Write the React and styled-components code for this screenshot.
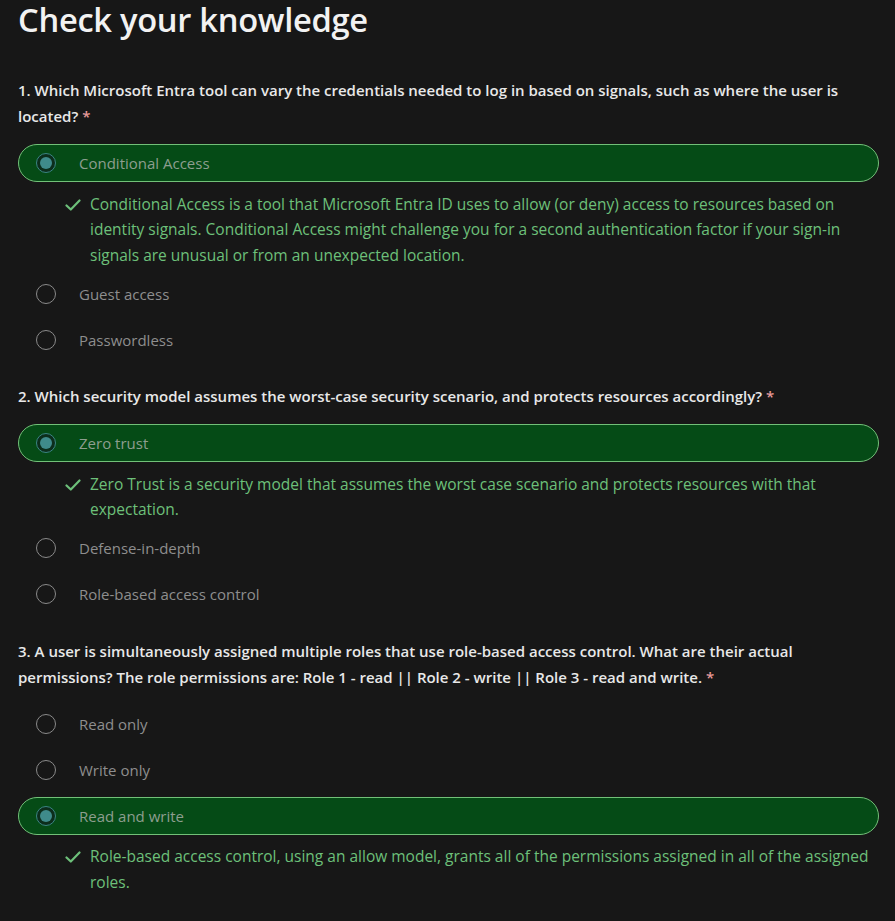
import styled, { createGlobalStyle } from "styled-components";

const GlobalStyle = createGlobalStyle`
  html, body {
    margin: 0;
    padding: 0;
    background: #171717;
  }
  body {
    font-family: "Segoe UI", "Open Sans", "Noto Sans", sans-serif;
  }
`;

const Page = styled.main`
  padding: 0 16px 40px 18px;
  background: #171717;
  min-height: 921px;
  box-sizing: border-box;
`;

const Title = styled.h2`
  margin: 0;
  font-size: 32.7px;
  line-height: 40px;
  font-weight: 600;
  color: #f2f2f2;
  letter-spacing: -0.3px;
`;

const Question = styled.section`
  margin-top: ${(p) => (p.$first ? "37px" : "24.5px")};
`;

const Prompt = styled.p`
  margin: 0;
  font-size: 15px;
  line-height: 26px;
  font-weight: 600;
  color: #e8e8e8;
`;

const Required = styled.span`
  color: #e79a9a;
`;

const Options = styled.div`
  display: flex;
  flex-direction: column;
  gap: 8px;
  margin-top: 15px;
`;

const Option = styled.label`
  display: flex;
  align-items: center;
  gap: 23px;
  height: 38px;
  box-sizing: border-box;
  padding-left: 17px;
  border-radius: 19px;
  border: 1px solid ${(p) => (p.$selected ? "#72c078" : "transparent")};
  background: ${(p) => (p.$selected ? "#054b16" : "transparent")};
  font-size: 15px;
  color: ${(p) => (p.$selected ? "#8d9e8f" : "#8e8e8e")};
`;

const Radio = styled.span`
  position: relative;
  width: 20px;
  height: 20px;
  box-sizing: border-box;
  border-radius: 50%;
  flex-shrink: 0;
  border: 1px solid ${(p) => (p.$selected ? "#3b8484" : "#8a8a8a")};
  background: ${(p) => (p.$selected ? "#0c2e1c" : "transparent")};

  &::after {
    content: "";
    display: ${(p) => (p.$selected ? "block" : "none")};
    position: absolute;
    inset: 3px;
    border-radius: 50%;
    background: #3f8b8b;
  }
`;

const Feedback = styled.div`
  display: flex;
  align-items: flex-start;
  gap: 9px;
  margin: 9.5px 0 -1.5px;
  padding-left: 47px;
  font-size: 15.5px;
  line-height: 25.5px;
  color: #6dc07a;
`;

const CheckIcon = styled.svg`
  flex-shrink: 0;
  width: 16px;
  height: 16px;
  margin-top: 5px;
`;

function Check() {
  return (
    <CheckIcon viewBox="0 0 16 16" fill="none">
      <path
        d="M1.5 8.5 L5.8 12.5 L14.5 3.5"
        stroke="#6dc07a"
        strokeWidth="2.2"
        strokeLinecap="round"
        strokeLinejoin="round"
      />
    </CheckIcon>
  );
}

const questions = [
  {
    prompt:
      "1. Which Microsoft Entra tool can vary the credentials needed to log in based on signals, such as where the user is located?",
    options: ["Conditional Access", "Guest access", "Passwordless"],
    answer: 0,
    feedback:
      "Conditional Access is a tool that Microsoft Entra ID uses to allow (or deny) access to resources based on identity signals. Conditional Access might challenge you for a second authentication factor if your sign-in signals are unusual or from an unexpected location.",
  },
  {
    prompt:
      "2. Which security model assumes the worst-case security scenario, and protects resources accordingly?",
    options: ["Zero trust", "Defense-in-depth", "Role-based access control"],
    answer: 0,
    feedback:
      "Zero Trust is a security model that assumes the worst case scenario and protects resources with that expectation.",
  },
  {
    prompt:
      "3. A user is simultaneously assigned multiple roles that use role-based access control. What are their actual permissions? The role permissions are: Role 1 - read || Role 2 - write || Role 3 - read and write.",
    options: ["Read only", "Write only", "Read and write"],
    answer: 2,
    feedback:
      "Role-based access control, using an allow model, grants all of the permissions assigned in all of the assigned roles.",
  },
];

export default function App() {
  return (
    <>
      <GlobalStyle />
      <Page>
        <Title>Check your knowledge</Title>
        {questions.map((q, qi) => (
          <Question key={qi} $first={qi === 0}>
            <Prompt>
              {q.prompt} <Required>*</Required>
            </Prompt>
            <Options>
              {q.options.map((opt, oi) => {
                const selected = oi === q.answer;
                return (
                  <div key={opt}>
                    <Option $selected={selected}>
                      <Radio $selected={selected} />
                      {opt}
                    </Option>
                    {selected && (
                      <Feedback>
                        <Check />
                        <span>{q.feedback}</span>
                      </Feedback>
                    )}
                  </div>
                );
              })}
            </Options>
          </Question>
        ))}
      </Page>
    </>
  );
}
